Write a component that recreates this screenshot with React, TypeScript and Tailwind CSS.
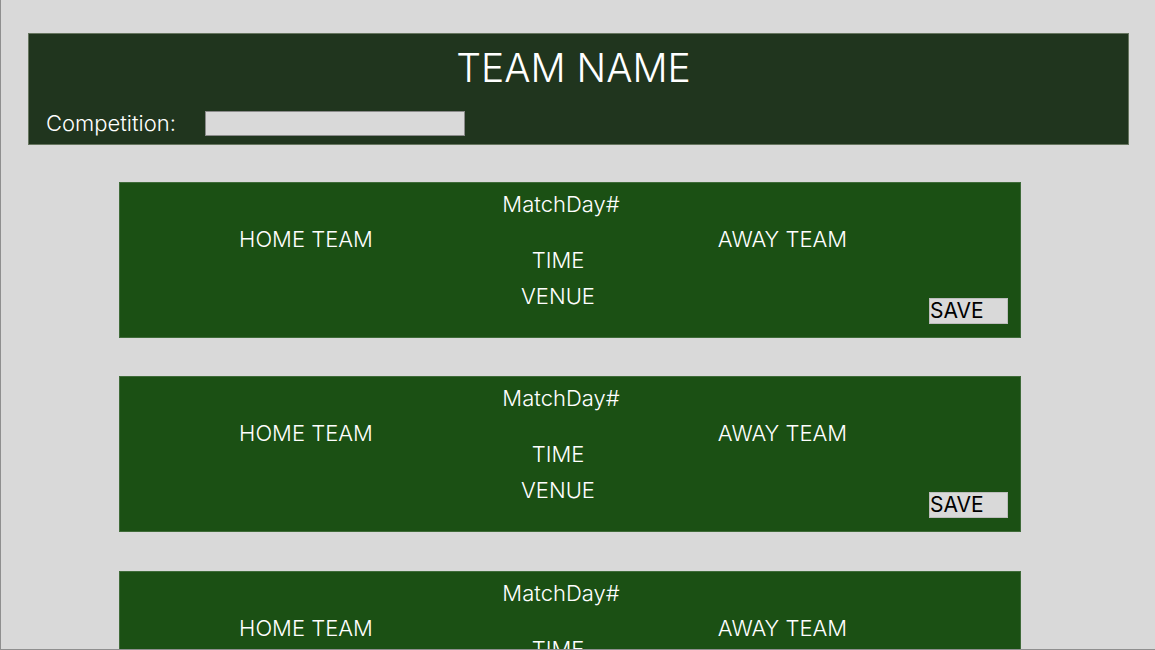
import React from "react";

function MatchCard() {
  return (
    <div className="grid h-[156px] w-[902px] shrink-0 grid-cols-[372px_132px_306px_1fr] grid-rows-[24px_1fr] border border-[#3f6b39] bg-[#1b5014] pt-[9px] pb-[13px] text-white">
      <div className="col-start-2 row-start-1 flex justify-center whitespace-nowrap pl-[6px] text-[22px] font-light leading-[24px]">
        MatchDay#
      </div>
      <div className="col-start-1 row-start-2 mt-[11px] whitespace-nowrap text-center text-[22px] font-light leading-[24px]">
        HOME TEAM
      </div>
      <div className="col-start-2 row-start-2 flex flex-col items-center">
        <div className="mt-[32px] whitespace-nowrap text-[22px] font-light leading-[24px]">TIME</div>
        <div className="mt-[12px] whitespace-nowrap text-[22px] font-light leading-[24px]">VENUE</div>
      </div>
      <div className="col-start-3 row-start-2 mt-[11px] whitespace-nowrap pl-[11px] text-center text-[22px] font-light leading-[24px]">
        AWAY TEAM
      </div>
      <div className="col-start-4 row-start-2 flex items-end">
        <button className="-ml-px h-[26px] w-[79px] border border-[#bdbdbd] bg-[#d9d9d9] text-left text-[21px] leading-[24px] text-black">
          SAVE
        </button>
      </div>
    </div>
  );
}

export default function App() {
  return (
    <div
      className="h-screen overflow-hidden border-l border-b border-[#8f8f8f] bg-[#d9d9d9] pt-[33px] pl-[27px]"
      style={{ fontFamily: "Inter, 'Noto Sans', sans-serif" }}
    >
      <header className="flex h-[112px] w-[1101px] flex-col border border-[#66755f] bg-[#20351e] pt-[10px] text-white">
        <h1 className="pr-[10px] text-center text-[39px] font-light leading-[48px]">TEAM NAME</h1>
        <div className="mt-[18px] flex items-center gap-[29px] pl-[17px]">
          <span className="text-[22px] font-light leading-[26px]">Competition:</span>
          <div className="h-[25px] w-[260px] border border-[#8a8a8a] bg-[#d9d9d9]" />
        </div>
      </header>
      <main className="mt-[37px] flex flex-col gap-[38px] pl-[91px]">
        <MatchCard />
        <MatchCard />
        <div className="mt-px">
          <MatchCard />
        </div>
      </main>
    </div>
  );
}
